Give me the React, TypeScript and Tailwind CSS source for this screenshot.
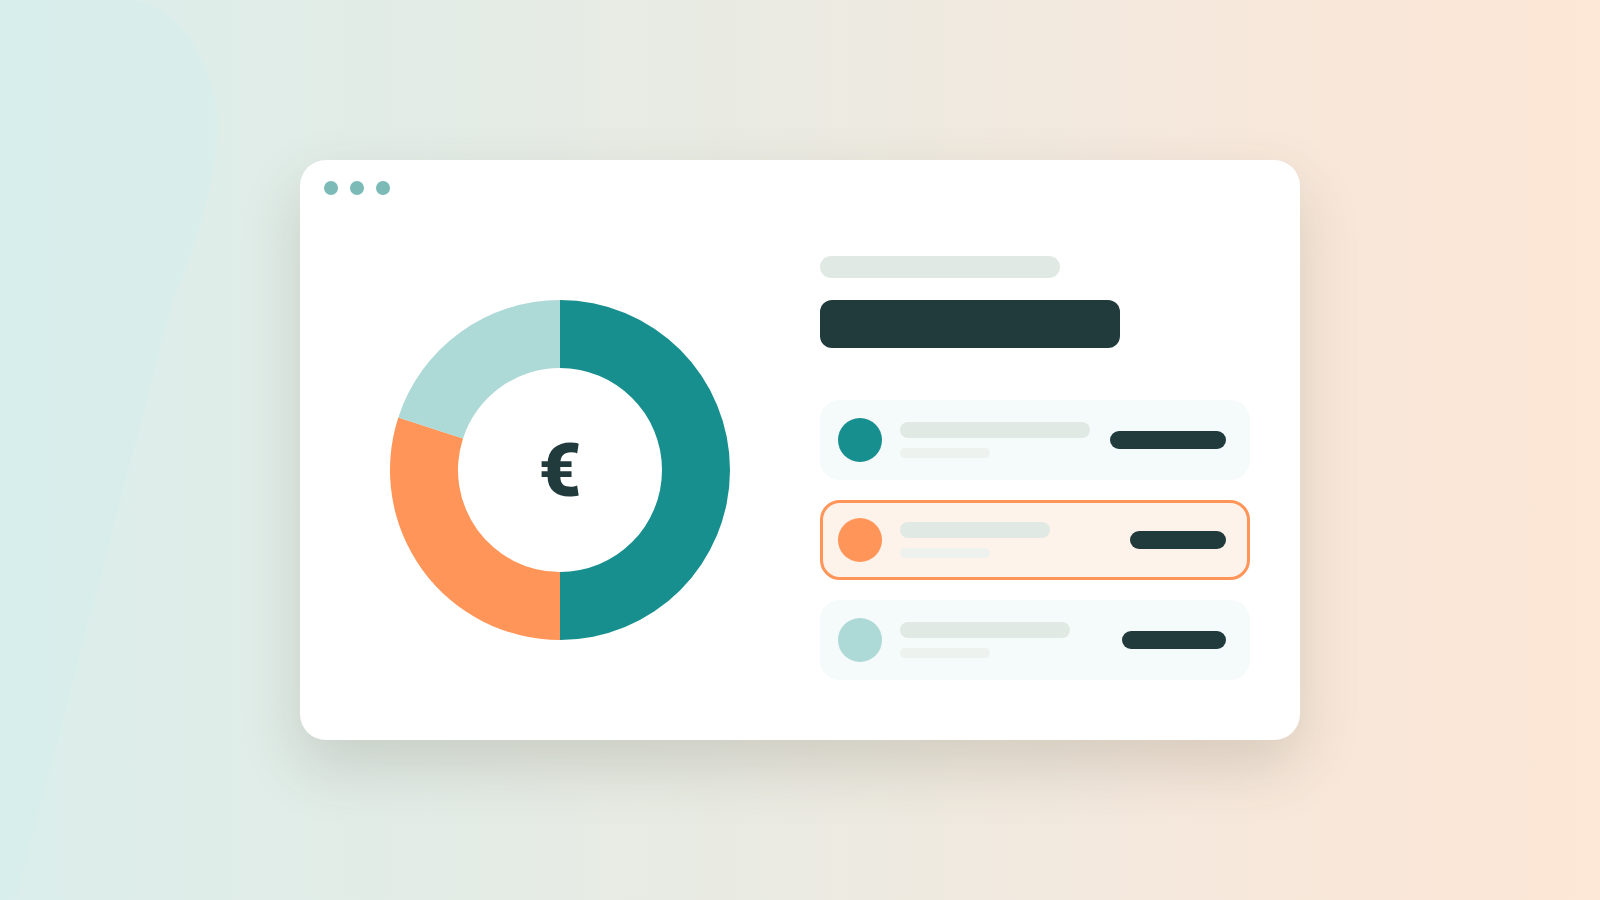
const rows = [
  { dot: 'bg-[#178f8e]', line: 'w-[190px]', bar: 'w-[116px]', active: false },
  { dot: 'bg-[#ff9559]', line: 'w-[150px]', bar: 'w-[96px]', active: true },
  { dot: 'bg-[#add9d7]', line: 'w-[170px]', bar: 'w-[104px]', active: false },
]

// donut segments, as fractions of the ring, clockwise from 12 o'clock
const segments = [
  { color: '#178f8e', from: 0, to: 0.5 },
  { color: '#ff9559', from: 0.5, to: 0.8 },
  { color: '#add9d7', from: 0.8, to: 1 },
]

function arcPath(from: number, to: number) {
  const cx = 170
  const cy = 170
  const R = 170
  const r = 102
  const a0 = from * Math.PI * 2
  const a1 = to * Math.PI * 2
  const p = (rad: number, a: number) => [cx + rad * Math.sin(a), cy - rad * Math.cos(a)]
  const [x0, y0] = p(R, a0)
  const [x1, y1] = p(R, a1)
  const [x2, y2] = p(r, a1)
  const [x3, y3] = p(r, a0)
  const large = to - from > 0.5 ? 1 : 0
  return `M${x0} ${y0} A${R} ${R} 0 ${large} 1 ${x1} ${y1} L${x2} ${y2} A${r} ${r} 0 ${large} 0 ${x3} ${y3} Z`
}

function Donut() {
  return (
    <svg width="340" height="340" viewBox="0 0 340 340" className="mt-[5px] shrink-0">
      {segments.map((s) => (
        <path key={s.color} d={arcPath(s.from, s.to)} fill={s.color} />
      ))}
      <text
        x="170"
        y="196"
        textAnchor="middle"
        fill="#213b3c"
        fontSize="74"
        fontWeight="900"
        fontFamily="Roboto, 'Noto Sans', sans-serif"
      >
        €
      </text>
    </svg>
  )
}

function Row({ dot, line, bar, active }: (typeof rows)[number]) {
  return (
    <div
      className={
        active
          ? 'flex h-[80px] w-[430px] items-center gap-[18px] rounded-[20px] border-[3px] border-[#ff9559] bg-[#fef3ea] pl-[15px] pr-[21px]'
          : 'flex h-[80px] w-[430px] items-center gap-[18px] rounded-[20px] border-[3px] border-transparent bg-[#f5fafa] pl-[15px] pr-[21px]'
      }
    >
      <div className={`h-[44px] w-[44px] shrink-0 rounded-full ${dot}`} />
      <div className="flex flex-col gap-[10px]">
        <div className={`h-[16px] rounded-full bg-[#e1e9e4] ${line}`} />
        <div className="h-[10px] w-[90px] rounded-full bg-[#edf2ef]" />
      </div>
      <div className={`ml-auto h-[18px] rounded-full bg-[#213b3c] ${bar}`} />
    </div>
  )
}

export default function App() {
  return (
    <div className="relative flex h-[900px] w-full items-center justify-center overflow-hidden bg-[linear-gradient(90deg,#dbeeeb_0%,#e9ebe3_45%,#f6e8dc_75%,#fde7d6_100%)]">
      {/* soft blob top-left */}
      <svg className="pointer-events-none absolute inset-0" width="1600" height="900" viewBox="0 0 1600 900">
        <path
          d="M0 0 L125 0 C175 2 203 45 215 100 C224 150 205 225 173 300 L15 900 L0 900 Z"
          fill="#d3eeed"
          opacity="0.45"
        />
      </svg>

      <div className="relative flex h-[580px] w-[1000px] flex-col rounded-[26px] bg-white shadow-[0_26px_60px_rgba(80,70,50,0.18)]">
        {/* window dots */}
        <div className="flex gap-3 pl-6 pt-[21px]">
          <div className="h-[14px] w-[14px] rounded-full bg-[#7bbab7]" />
          <div className="h-[14px] w-[14px] rounded-full bg-[#7bbab7]" />
          <div className="h-[14px] w-[14px] rounded-full bg-[#7bbab7]" />
        </div>

        <div className="flex flex-1 items-center gap-[90px] pl-[90px] pr-[50px]">
          <Donut />

          <div className="flex flex-col">
            <div className="h-[22px] w-[240px] rounded-full bg-[#e1e9e4]" />
            <div className="mt-[22px] h-[48px] w-[300px] rounded-xl bg-[#213b3c]" />
            <div className="mt-[52px] flex flex-col gap-5">
              {rows.map((r, i) => (
                <Row key={i} {...r} />
              ))}
            </div>
          </div>
        </div>
      </div>
    </div>
  )
}
